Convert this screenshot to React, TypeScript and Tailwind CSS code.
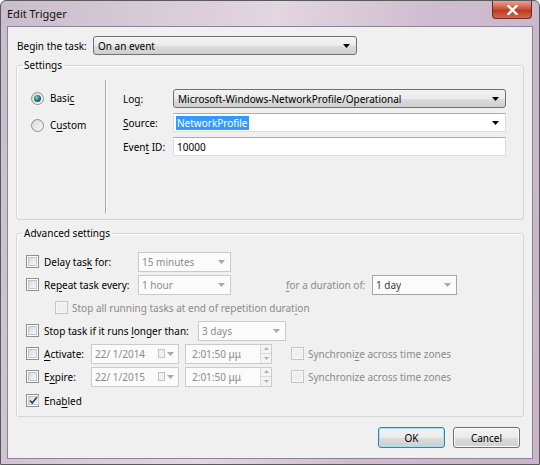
import * as React from "react"

type Props = { children?: React.ReactNode; className?: string }

function Arrow({ light }: { light?: boolean }) {
  return (
    <svg width="7" height="4" viewBox="0 0 7 4" className="shrink-0">
      <path d="M0 0h7L3.5 4z" fill={light ? "#a8a8a8" : "#000"} />
    </svg>
  )
}

function U({ children }: Props) {
  return <span className="underline underline-offset-[2px] decoration-1">{children}</span>
}

function Check({ checked, disabled }: { checked?: boolean; disabled?: boolean }) {
  return (
    <span
      className={`w-[13px] h-[13px] shrink-0 border p-px flex ${
        disabled ? "border-[#c5c5c5] bg-[#f7f7f7]" : "border-[#8e8f8f] bg-white"
      }`}
    >
      <span
        className={`flex-1 flex items-center justify-center ${
          disabled
            ? "bg-[#f0f0f0]"
            : "border border-[#c2c6cc] bg-[linear-gradient(135deg,#d8dadd,#f8f9fa)]"
        }`}
      >
        {checked && (
          <svg width="9" height="9" viewBox="0 0 9 9">
            <path d="M1 4.5l2.2 2.6L8 1.2" stroke="#2c4066" strokeWidth="1.6" fill="none" />
          </svg>
        )}
      </span>
    </span>
  )
}

function Radio({ on }: { on?: boolean }) {
  return (
    <span className="w-[13px] h-[13px] shrink-0 rounded-full border border-[#8e8f8f] bg-[linear-gradient(135deg,#d5d7da,#fbfbfb)] flex items-center justify-center">
      {on && (
        <span className="w-[7px] h-[7px] rounded-full bg-[radial-gradient(circle_at_40%_35%,#8fd0c8,#1d6a70_55%,#0e3c44)]" />
      )}
    </span>
  )
}

function DropList({ text, className }: { text: string; className?: string }) {
  return (
    <div
      className={`h-[19px] flex items-center justify-between pl-[4px] pr-[6px] rounded-[3px] border border-[#707070] bg-[linear-gradient(#f3f3f3,#ebebeb_50%,#dcdcdc_51%,#cfcfcf)] ${className}`}
    >
      <span className="truncate">{text}</span>
      <Arrow />
    </div>
  )
}

function Combo({
  text,
  className,
  dim,
}: {
  text: string
  className?: string
  dim?: boolean
}) {
  return (
    <div
      className={`h-[20px] flex items-center justify-between pl-[3px] pr-[5px] border ${
        dim ? "border-[#cbcbcb] text-[#8b8b8b]" : "border-[#a6a6a6] text-[#3c3c3c]"
      } bg-[#fbfbfb] ${className}`}
    >
      <span className="truncate">{text}</span>
      <Arrow light />
    </div>
  )
}

function DateBox({ text }: { text: string }) {
  return (
    <div className="w-[88px] h-[20px] flex items-center border border-[#cbcbcb] bg-[#fbfbfb] text-[#8b8b8b] pl-[3px] pr-[4px]">
      <span className="flex-1">{text}</span>
      <span className="w-[7px] h-[9px] border border-[#c4c4c4] bg-[#f0f0f0] mr-[2px]" />
      <Arrow light />
    </div>
  )
}

function TimeBox({ text }: { text: string }) {
  return (
    <div className="w-[87px] h-[20px] flex items-stretch border border-[#cbcbcb] bg-[#fbfbfb] text-[#8b8b8b]">
      <span className="flex-1 flex items-center pl-[6px]">{text}</span>
      <span className="w-[11px] flex flex-col border-l border-[#dadada]">
        <span className="flex-1 flex items-center justify-center border-b border-[#dadada] bg-[#f4f4f4]">
          <svg width="5" height="3" viewBox="0 0 5 3"><path d="M0 3h5L2.5 0z" fill="#b0b0b0" /></svg>
        </span>
        <span className="flex-1 flex items-center justify-center bg-[#f4f4f4]">
          <svg width="5" height="3" viewBox="0 0 5 3"><path d="M0 0h5L2.5 3z" fill="#b0b0b0" /></svg>
        </span>
      </span>
    </div>
  )
}

function Button({ children, focused }: Props & { focused?: boolean }) {
  return (
    <button
      className={`w-[67px] h-[21px] rounded-[3px] border ${
        focused
          ? "border-[#3c7fb1] shadow-[inset_0_0_0_1px_#9fe3f5]"
          : "border-[#707070] shadow-[inset_0_0_0_1px_#fcfcfc]"
      } bg-[linear-gradient(#f2f2f2,#ebebeb_50%,#dddddd_51%,#cfcfcf)] text-black`}
    >
      {children}
    </button>
  )
}

function Row({ children, className }: Props) {
  return <div className={`h-[23px] flex items-center ${className ?? ""}`}>{children}</div>
}

export default function App() {
  return (
    <div className="w-[540px] h-[465px] relative overflow-hidden border border-[#5a5a5a] rounded-t-[6px] bg-[linear-gradient(100deg,#c9bccc_0%,#d8cbd8_25%,#e2d6e1_45%,#cfbdcf_70%,#c9b4ca_100%)] font-['Noto_Sans',sans-serif] text-[10px] leading-[16px] text-black">
      <div className="h-[25px] flex items-center pl-[6px] text-[11px] text-[#111]">Edit Trigger</div>

      <div className="absolute top-0 right-[7px] w-[40px] h-[18px] rounded-b-[4px] border border-t-0 border-[#6b2a22] bg-[linear-gradient(#e9a391,#d0553f_45%,#bd3a22_55%,#d06a4c)] flex items-center justify-center">
        <svg width="11" height="10" viewBox="0 0 11 10">
          <path d="M1.5 1l8 8M9.5 1l-8 8" stroke="#fff" strokeWidth="2.4" strokeLinecap="square" />
        </svg>
      </div>

      <div className="mx-[6px] h-[433px] border border-[#8c8396] bg-[#f0f0f0] flex flex-col">
        <div className="mt-[9px] ml-[9px] flex items-center">
          <span className="w-[76px]">Begin the task:</span>
          <DropList text="On an event" className="w-[264px]" />
        </div>

        <fieldset className="mt-[2px] mx-[8px] h-[163px] rounded-[3px] border border-[#d5d5d5] shadow-[inset_1px_1px_0_#fff]">
          <legend className="ml-[5px] px-[2px] leading-[16px]">Settings</legend>
          <div className="mt-[7px] h-[133px] flex">
            <div className="w-[88px] pl-[14px] pt-[10px] flex flex-col gap-[11px]">
              <label className="flex items-center gap-[6px]">
                <Radio on />
                <span>
                  Basi<U>c</U>
                </span>
              </label>
              <label className="flex items-center gap-[6px]">
                <Radio />
                <span>
                  C<U>u</U>stom
                </span>
              </label>
            </div>
            <div className="w-[2px] border-l border-[#a9a9a9] border-r border-r-white" />
            <div className="flex-1 pl-[16px] pr-[17px] pt-[9px] flex flex-col gap-[5px]">
              <div className="flex items-center">
                <span className="w-[50px]">
                  Lo<U>g</U>:
                </span>
                <DropList text="Microsoft-Windows-NetworkProfile/Operational" className="flex-1" />
              </div>
              <div className="flex items-center">
                <span className="w-[50px]">
                  <U>S</U>ource:
                </span>
                <div className="flex-1 h-[19px] flex items-center justify-between border border-[#dadde2] border-t-[#abadb3] bg-white pl-[2px] pr-[6px]">
                  <span className="bg-[#3399ff] text-white px-[1px] leading-[14px]">NetworkProfile</span>
                  <Arrow />
                </div>
              </div>
              <div className="flex items-center">
                <span className="w-[50px]">
                  Even<U>t</U> ID:
                </span>
                <div className="flex-1 h-[19px] flex items-center border border-[#dadde2] border-t-[#abadb3] bg-white pl-[3px]">
                  10000
                </div>
              </div>
            </div>
          </div>
        </fieldset>

        <fieldset className="mt-[5px] mx-[8px] h-[192px] rounded-[3px] border border-[#d5d5d5] shadow-[inset_1px_1px_0_#fff]">
          <legend className="ml-[5px] px-[2px] leading-[16px]">Advanced settings</legend>
          <div className="mt-[9px] pl-[9px] flex flex-col">
            <Row>
              <Check />
              <span className="ml-[5px] w-[94px]">
                Delay tas<U>k</U> for:
              </span>
              <Combo text="15 minutes" dim className="w-[93px]" />
            </Row>
            <Row>
              <Check />
              <span className="ml-[5px] w-[94px]">
                Re<U>p</U>eat task every:
              </span>
              <Combo text="1 hour" dim className="w-[93px]" />
              <span className="ml-[55px] w-[86px] text-[#8b8b8b]">
                <U>f</U>or a duration of:
              </span>
              <Combo text="1 day" className="w-[85px]" />
            </Row>
            <Row className="pl-[29px]">
              <Check disabled />
              <span className="ml-[4px] text-[#8b8b8b]">
                Stop all running tasks at end of repetition durat<U>i</U>on
              </span>
            </Row>
            <Row>
              <Check />
              <span className="ml-[5px] w-[154px]">
                Stop task if it runs <U>l</U>onger than:
              </span>
              <Combo text="3 days" dim className="w-[88px]" />
            </Row>
            <Row>
              <Check />
              <span className="ml-[5px] w-[47px]">
                <U>A</U>ctivate:
              </span>
              <DateBox text="22/ 1/2014" />
              <span className="ml-[6px]">
                <TimeBox text="2:01:50 μμ" />
              </span>
              <span className="ml-[19px]">
                <Check disabled />
              </span>
              <span className="ml-[4px] text-[#8b8b8b]">
                Synchroni<U>z</U>e across time zones
              </span>
            </Row>
            <Row>
              <Check />
              <span className="ml-[5px] w-[47px]">
                E<U>x</U>pire:
              </span>
              <DateBox text="22/ 1/2015" />
              <span className="ml-[6px]">
                <TimeBox text="2:01:50 μμ" />
              </span>
              <span className="ml-[19px]">
                <Check disabled />
              </span>
              <span className="ml-[4px] text-[#8b8b8b]">
                Synchronize across time zones
              </span>
            </Row>
            <Row className="mt-px">
              <Check checked />
              <span className="ml-[5px]">
                Ena<U>b</U>led
              </span>
            </Row>
          </div>
        </fieldset>

        <div className="mt-[10px] mr-[12px] flex justify-end gap-[8px]">
          <Button focused>OK</Button>
          <Button>Cancel</Button>
        </div>
      </div>
    </div>
  )
}
